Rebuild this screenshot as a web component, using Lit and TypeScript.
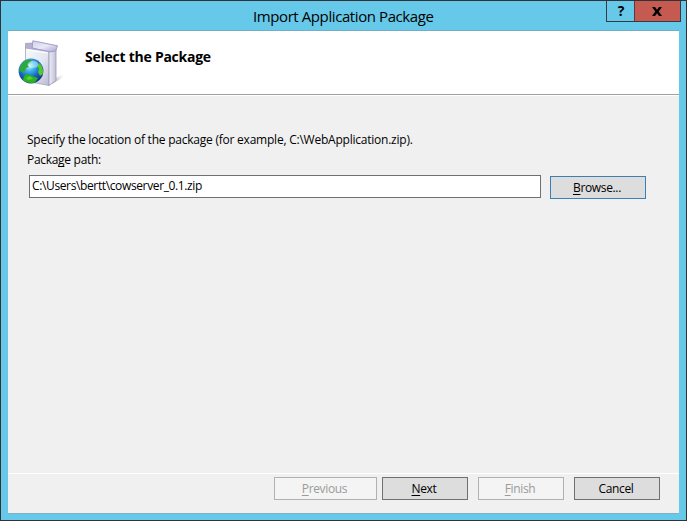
import { LitElement, html, css } from "lit";
import { customElement } from "lit/decorators.js";

@customElement("package-icon")
class PackageIcon extends LitElement {
  static styles = css`
    :host { display: block; width: 48px; height: 48px; }
    svg { display: block; }
  `;
  render() {
    return html`<svg width="48" height="48" viewBox="0 0 48 48">
      <defs>
        <linearGradient id="front" x1="0" y1="0" x2="1" y2="1">
          <stop offset="0" stop-color="#f8fafe" /><stop offset=".55" stop-color="#e3e5f1" /><stop offset="1" stop-color="#b9b9d2" />
        </linearGradient>
        <linearGradient id="side" x1="0" y1="0" x2="1" y2="0">
          <stop offset="0" stop-color="#eeeef7" /><stop offset="1" stop-color="#c0c0d6" />
        </linearGradient>
        <linearGradient id="flap" x1="0" y1="0" x2="1" y2="1">
          <stop offset="0" stop-color="#d2cfe9" /><stop offset=".5" stop-color="#e9e8f7" /><stop offset="1" stop-color="#a8a4d0" />
        </linearGradient>
        <radialGradient id="sea" cx=".43" cy=".3" r=".7">
          <stop offset="0" stop-color="#c4f5ff" /><stop offset=".28" stop-color="#43b7ea" /><stop offset=".65" stop-color="#1565bd" /><stop offset="1" stop-color="#122f83" />
        </radialGradient>
        <linearGradient id="shade" x1="0" y1="0" x2="1" y2="0">
          <stop offset="0" stop-color="#777" stop-opacity=".6" /><stop offset="1" stop-color="#999" stop-opacity="0" />
        </linearGradient>
      </defs>
      <path d="M36 39 L46 34 L43 39 L34 44Z" fill="url(#shade)" />
      <path d="M7.5 3.5 L15 3 L37 8 L33 13 L7.5 9Z" fill="#b3b1d0" stroke="#9694b8" stroke-width=".7" />
      <path d="M7.5 8 L31 11.5 V45.5 L7.5 41Z" fill="url(#front)" stroke="#a3a2c0" stroke-width=".8" />
      <path d="M31 12 L38 8 V40.5 L31 45.5Z" fill="url(#side)" stroke="#9897b5" stroke-width=".8" />
      <path d="M14.8 .8 L39.5 5.8 L37.5 11 L32.5 11.8 L14.2 8Z" fill="url(#flap)" stroke="#a19dcb" stroke-width="1" />
      <path d="M9.5 10 L30 13" stroke="#fff" stroke-width="1" />
      <circle cx="13" cy="31" r="12.4" fill="url(#sea)" />
      <path d="M3 25 Q6 20 11 19.5 L14 20 L12 23 L10 25 L11 27 L8 28 L7 31 L5 33 L2.5 31 L1.3 32 Q1 28 3 25Z" fill="#30a83f" />
      <path d="M21.5 23 Q26 28 24.8 34 L22 36 L20 32 L21 29 L19.5 26Z" fill="#52c929" />
      <path d="M6 36 L10 34 L14 36 L20 38 L17 42.5 Q10 44.5 5 39.8Z" fill="#2bb223" />
      <path d="M8 38 L12 36 L15 39 L10 40Z" fill="#6be333" opacity=".7" />
      <ellipse cx="15" cy="24.5" rx="5.5" ry="3.5" fill="#eaffff" opacity=".45" />
    </svg>`;
  }
}

@customElement("app-root")
class AppRoot extends LitElement {
  static styles = css`
    :host {
      display: block; width: 687px; height: 521px;
      font: 12px/16px "Open Sans", "Noto Sans", sans-serif; color: #000;
    }
    * { box-sizing: border-box; }
    .window {
      width: 687px; height: 521px; background: #66c9e9; border: 1px solid #333337;
      padding: 0 7px; display: grid; grid-template-rows: 30px 483px;
    }
    .titlebar {
      display: grid; grid-template-columns: 1fr auto; align-items: start;
      border-bottom: 1px solid #74aec4; width: 671px;
    }
    .title {
      justify-self: start; margin: 5px 0 0 245px;
      font-size: 15px; line-height: 20px; white-space: nowrap; letter-spacing: -0.41px;
    }
    .controls { display: flex; width: 75px; height: 21px; margin-right: -2px; border: 1px solid #393a40; border-top: 0; }
    .help, .close { display: flex; align-items: center; justify-content: center; height: 20px; font-weight: 700; }
    .help { width: 27px; font-size: 14px; padding-left: 1px; }
    .close { flex: 1; background: #c45a50; border-left: 1px solid #5b3a3d; padding-right: 1px; }
    .close svg { display: block; }
    .client {
      width: 671px; height: 483px; background: #f0f0f0; border-bottom: 1px solid #80b0c2;
      display: grid; grid-template-rows: 65px 377px 1fr;
    }
    .header { background: #fff; border-bottom: 1px solid #fff; box-shadow: inset 0 -1px #a0a0a0; display: flex; }
    .header package-icon { margin: 9px 0 0 10px; }
    .heading { margin: 17px 0 0 19px; font-size: 14px; line-height: 18px; font-weight: 700; letter-spacing: -0.25px; }
    .body { padding: 36px 0 0 19px; }
    .line { display: block; height: 20px; white-space: nowrap; }
    .line + .line { height: 23px; }
    .desc { letter-spacing: -0.23px; }
    .label { letter-spacing: -0.3px; }
    u { text-decoration: underline; text-decoration-thickness: 1px; text-underline-offset: 2px; text-decoration-skip-ink: none; }
    .row { display: flex; margin-left: 2px; gap: 9px; align-items: flex-start; }
    .field { width: 512px; height: 23px; background: #fff; border: 1px solid #707070; padding: 2px 0 0 2px; letter-spacing: -0.37px; }
    .btn {
      appearance: none; width: 86px; height: 23px; padding: 0 2px 0 0; margin: 0; border: 1px solid #707070; border-radius: 0;
      background: #ddd; color: #000; font: inherit; line-height: 21px; letter-spacing: -0.35px;
    }
    .browse { width: 96px; margin-top: 1px; padding-top: 1px; line-height: 20px; border-color: #3c7fb1; }
    .btn:disabled { background: #f4f4f4; border-color: #adb2b5; color: #9b9b9b; }
    .footer { border-top: 1px solid #fff; display: flex; padding: 3px 19px 0 0; justify-content: flex-end; gap: 10px; }
    .footer .btn { padding-top: 1px; line-height: 20px; }
    .previous { width: 103px; margin-right: -5px; }
  `;
  render() {
    return html`<div class="window">
      <div class="titlebar">
        <div class="title">Import Application Package</div>
        <div class="controls">
          <div class="help">?</div>
          <div class="close"><svg width="10" height="9" viewBox="0 0 10 9"><path d="M0 0H3L5 2.7 7 0H10L6.7 4.5 10 9H7L5 6.3 3 9H0L3.3 4.5Z" /></svg></div>
        </div>
      </div>
      <div class="client">
        <div class="header"><package-icon></package-icon><div class="heading">Select the Package</div></div>
        <div class="body">
          <span class="line"><span class="desc">Specify the location of the package (for example, C:\\WebApplication.zip).</span></span>
          <span class="line"><span class="label">Packa<u>g</u>e path:</span></span>
          <div class="row">
            <div class="field">C:\\Users\\bertt\\cowserver_0.1.zip</div>
            <button class="btn browse"><u>B</u>rowse...</button>
          </div>
        </div>
        <div class="footer">
          <button class="btn previous" disabled><u>P</u>revious</button>
          <button class="btn"><u>N</u>ext</button>
          <button class="btn" disabled><u>F</u>inish</button>
          <button class="btn">Cancel</button>
        </div>
      </div>
    </div>`;
  }
}
